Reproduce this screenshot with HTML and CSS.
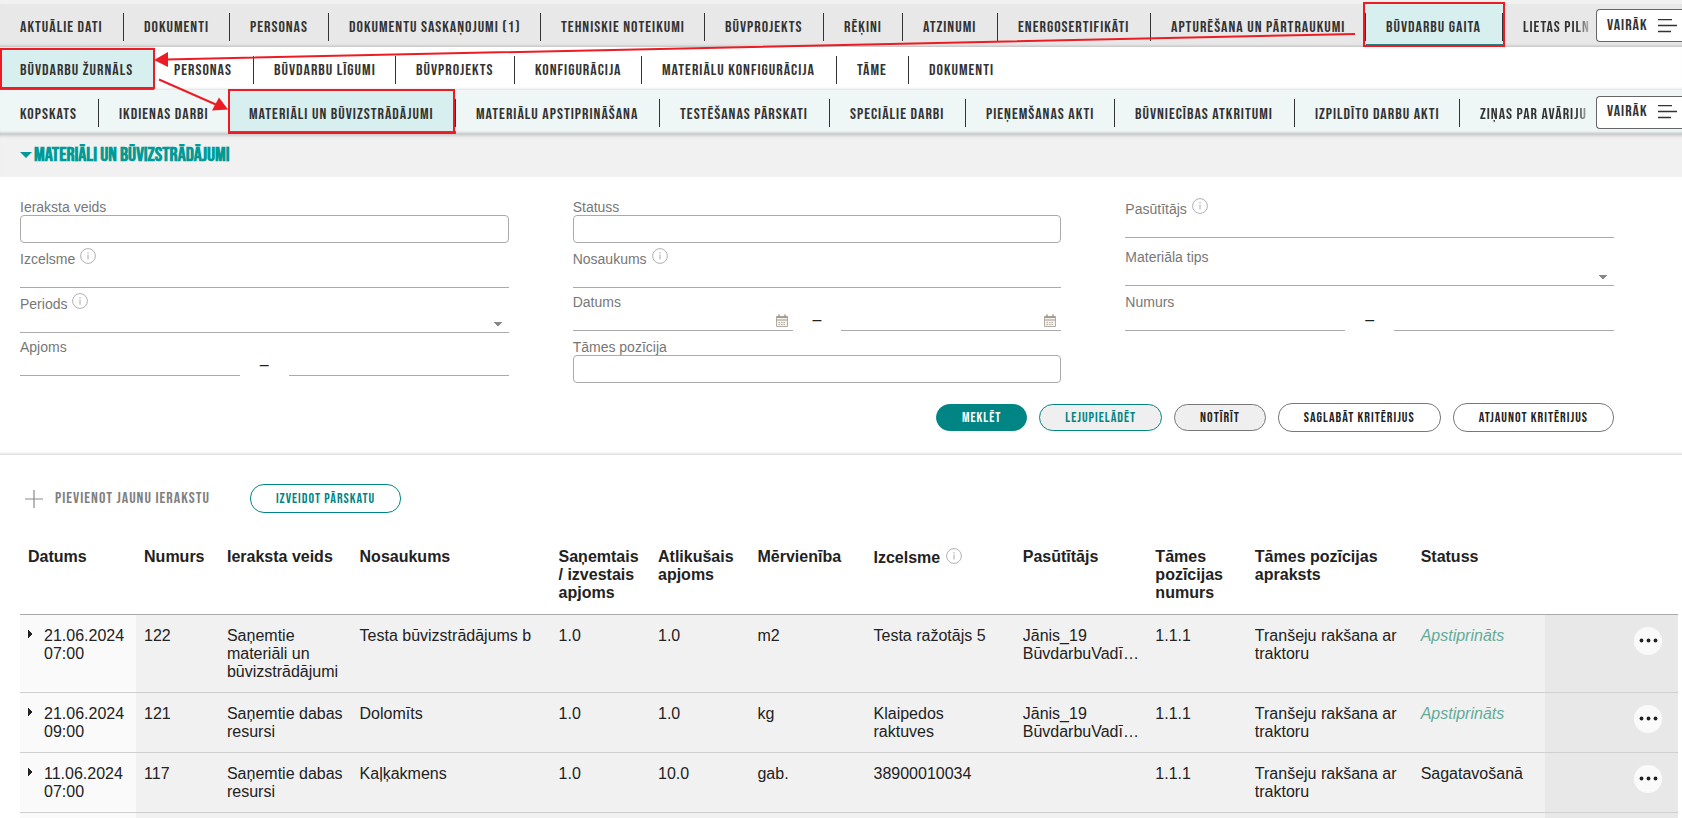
FILE: index.html
```html
<!DOCTYPE html>
<html lang="lv">
<head>
<meta charset="utf-8">
<title>Materiāli un būvizstrādājumi</title>
<link rel="stylesheet" href="styles.css">
</head>
<body>
<svg class="symbols" aria-hidden="true">
  <symbol id="info" viewBox="0 0 16 16"><circle cx="8" cy="8" r="7.4" fill="none" stroke="#b0b0b0"/><path d="M8 6.5v5M8 4v1.4" stroke="#b8b8b8" stroke-width="1.2" fill="none"/></symbol>
  <symbol id="menu" viewBox="0 0 20 14"><path d="M0 .5h14M0 6.500h19M0 12.500h13" stroke="#333" stroke-width="1.3" fill="none"/></symbol>
  <symbol id="calendar" viewBox="0 0 12 13"><path d="M.5 2.500h11v10H.5z" fill="#f4f2ee" stroke="#b5ada2"/><path d="M.5 2.500h11v1.500H.5zM.5 5.500h11v1H.5z" fill="#a49b8e"/><path d="M3 .5v2.500M9 .5v2.500" stroke="#a49b8e" stroke-width="1.600"/><path d="M2.500 8.500h7M2.500 10.500h7" stroke="#b5ada2" stroke-dasharray="1.500 1"/></symbol>
  <symbol id="dots" viewBox="0 0 28 28"><g fill="#222"><circle cx="7.500" cy="13.500" r="1.900"/><circle cx="14.500" cy="13.500" r="1.900"/><circle cx="21.500" cy="13.500" r="1.900"/></g></symbol>
</svg>

<header class="navs">
  <nav class="nav nav-main" aria-label="Lieta">
    <a href="#">Aktuālie dati</a><a href="#">Dokumenti</a><a href="#">Personas</a><a href="#">Dokumentu saskaņojumi (1)</a><a href="#">Tehniskie noteikumi</a><a href="#">Būvprojekts</a><a href="#">Rēķini</a><a href="#">Atzinumi</a><a href="#">Energosertifikāti</a><a href="#">Apturēšana un pārtraukumi</a><a href="#" class="active">Būvdarbu gaita</a><a href="#" class="cut">Lietas piln</a>
    <button type="button">Vairāk <svg class="menu-icon"><use href="#menu"/></svg></button>
  </nav>
  <nav class="nav nav-work" aria-label="Būvdarbi">
    <a href="#" class="active">Būvdarbu žurnāls</a><a href="#">Personas</a><a href="#">Būvdarbu līgumi</a><a href="#">Būvprojekts</a><a href="#">Konfigurācija</a><a href="#">Materiālu konfigurācija</a><a href="#">Tāme</a><a href="#">Dokumenti</a>
  </nav>
  <nav class="nav nav-journal" aria-label="Žurnāls">
    <a href="#">Kopskats</a><a href="#">Ikdienas darbi</a><a href="#" class="active">Materiāli un būvizstrādājumi</a><a href="#">Materiālu apstiprināšana</a><a href="#">Testēšanas pārskati</a><a href="#">Speciālie darbi</a><a href="#">Pieņemšanas akti</a><a href="#">Būvniecības atkritumi</a><a href="#">Izpildīto darbu akti</a><a href="#" class="cut">Ziņas par avāriju</a>
    <button type="button">Vairāk <svg class="menu-icon"><use href="#menu"/></svg></button>
  </nav>
  <svg class="marks" aria-hidden="true">
    <g fill="none" stroke="#ed1c24" stroke-width="2">
      <path d="M1364 3h140v43h-140zM1 49h153v39H1zM229 90h225v43H229z"/>
      <path d="M1355 34L166 59.500M159 79.500L217 105"/>
    </g>
    <path d="M154 60l14-8v15zM228 109.500l-9-12-7 13z" fill="#ed1c24"/>
  </svg>
</header>

<main>
  <h1><button type="button"><span class="caret"></span>Materiāli un būvizstrādājumi</button></h1>

  <form class="search">
    <div class="fields">
      <div class="field"><label for="veids">Ieraksta veids</label><input id="veids" class="box" type="text"></div>
      <div class="field"><label for="statuss">Statuss</label><input id="statuss" class="box" type="text"></div>
      <div class="field"><label for="pasutitajs" class="hint">Pasūtītājs <svg class="info"><use href="#info"/></svg></label><input id="pasutitajs" type="text"></div>

      <div class="field"><label for="izcelsme" class="hint">Izcelsme <svg class="info"><use href="#info"/></svg></label><input id="izcelsme" type="text"></div>
      <div class="field"><label for="nosaukums" class="hint">Nosaukums <svg class="info"><use href="#info"/></svg></label><input id="nosaukums" type="text"></div>
      <div class="field"><label for="tips">Materiāla tips</label><select id="tips"><option></option></select></div>

      <div class="field"><label for="periods" class="hint">Periods <svg class="info"><use href="#info"/></svg></label><select id="periods"><option></option></select></div>
      <div class="field"><label for="datums">Datums</label>
        <div class="range"><span class="date"><input id="datums" type="text"><svg class="calendar"><use href="#calendar"/></svg></span><span>–</span><span class="date"><input type="text" aria-label="Datums līdz"><svg class="calendar"><use href="#calendar"/></svg></span></div></div>
      <div class="field"><label for="numurs">Numurs</label>
        <div class="range"><input id="numurs" type="text"><span>–</span><input type="text" aria-label="Numurs līdz"></div></div>

      <div class="field"><label for="apjoms">Apjoms</label>
        <div class="range"><input id="apjoms" type="text"><span>–</span><input type="text" aria-label="Apjoms līdz"></div></div>
      <div class="field"><label for="tame">Tāmes pozīcija</label><input id="tame" class="box" type="text"></div>
    </div>
    <div class="buttons">
      <button type="button" class="btn primary">Meklēt</button>
      <button type="button" class="btn teal gray">Lejupielādēt</button>
      <button type="button" class="btn gray">Notīrīt</button>
      <button type="button" class="btn tall">Saglabāt kritērijus</button>
      <button type="button" class="btn tall">Atjaunot kritērijus</button>
    </div>
  </form>

  <section class="results">
    <div class="actions">
      <button type="button" class="add"><svg class="plus" viewBox="0 0 18 18"><path d="M9 0v18M0 9h18" stroke="#8a8a8a" stroke-width="1.200"/></svg>Pievienot jaunu ierakstu</button>
      <button type="button" class="btn teal tall">Izveidot pārskatu</button>
    </div>
    <table>
      <colgroup><col class="w7"><col class="w5"><col class="w8"><col class="w12"><col class="w6"><col class="w6"><col class="w7"><col class="w9"><col class="w8"><col class="w6"><col class="w10"><col class="w8"><col class="w8"></colgroup>
      <thead>
        <tr><th>Datums</th><th>Numurs</th><th>Ieraksta veids</th><th>Nosaukums</th><th>Saņemtais / izvestais apjoms</th><th>Atlikušais apjoms</th><th>Mērvienība</th><th>Izcelsme <svg class="info"><use href="#info"/></svg></th><th>Pasūtītājs</th><th>Tāmes pozīcijas numurs</th><th>Tāmes pozīcijas apraksts</th><th>Statuss</th><th></th></tr>
      </thead>
      <tbody>
        <tr><td class="when">21.06.2024 07:00</td><td>122</td><td>Saņemtie materiāli un būvizstrādājumi</td><td>Testa būvizstrādājums b</td><td>1.0</td><td>1.0</td><td>m2</td><td>Testa ražotājs 5</td><td>Jānis_19 BūvdarbuVadī…</td><td>1.1.1</td><td>Tranšeju rakšana ar traktoru</td><td class="approved">Apstiprināts</td><td class="menu"><button type="button" aria-label="Darbības"><svg><use href="#dots"/></svg></button></td></tr>
        <tr><td class="when">21.06.2024 09:00</td><td>121</td><td>Saņemtie dabas resursi</td><td>Dolomīts</td><td>1.0</td><td>1.0</td><td>kg</td><td>Klaipedos raktuves</td><td>Jānis_19 BūvdarbuVadī…</td><td>1.1.1</td><td>Tranšeju rakšana ar traktoru</td><td class="approved">Apstiprināts</td><td class="menu"><button type="button" aria-label="Darbības"><svg><use href="#dots"/></svg></button></td></tr>
        <tr><td class="when">11.06.2024 07:00</td><td>117</td><td>Saņemtie dabas resursi</td><td>Kaļķakmens</td><td>1.0</td><td>10.0</td><td>gab.</td><td>38900010034</td><td></td><td>1.1.1</td><td>Tranšeju rakšana ar traktoru</td><td>Sagatavošanā</td><td class="menu"><button type="button" aria-label="Darbības"><svg><use href="#dots"/></svg></button></td></tr>
        <tr><td></td><td></td><td></td><td></td><td></td><td></td><td></td><td></td><td></td><td></td><td></td><td></td><td class="menu"></td></tr>
      </tbody>
    </table>
  </section>
</main>
</body>
</html>
```

FILE: styles.css
```css
* { box-sizing: border-box; }

html, body { height: 100%; }

body {
  margin: 0;
  overflow: hidden;
  background: #fff;
  color: #222;
  font: 16px/18px "Liberation Sans", Arial, sans-serif;
}

button, input, select { font: inherit; color: inherit; }
button { cursor: pointer; }

.symbols { display: none; }

.nav, h1, .btn, .add {
  font-family: "Bebas Neue", "Liberation Sans Narrow", "Liberation Sans", sans-serif;
  text-transform: uppercase;
}

.nav, .nav button, .btn, .add { letter-spacing: 1px; }

/* Navigation */
.navs {
  position: relative;
  padding-top: 4px;
  background: #f1f1f1;
}

.nav {
  display: grid;
  height: 43px;
  font-size: 16px;
}

.nav-main {
  grid-template-columns: 124px 106px 99px 212px 164px 119px 79px 95px 153px 215px 137px 1fr 86px;
  background: #e8e8e8;
  box-shadow: inset 0 -3px 3px -2px #bbb;
}

.nav-work {
  grid-template-columns: 154px 100px 142px 119px 127px 195px 72px 1fr;
  background: #fff;
  box-shadow: inset 0 -3px 3px -2px #ddd;
}

.nav-journal {
  grid-template-columns: 99px 130px 227px 204px 170px 136px 149px 180px 165px 1fr 86px;
  height: 44px;
  background: #eef6f6;
  box-shadow: inset 0 -3px 3px -2px #bbb;
}

.nav a {
  display: flex;
  align-items: center;
  min-width: 0;
  padding-top: 5px;
  padding-left: 20px;
  color: #333;
  text-decoration: none;
  white-space: nowrap;
  background: linear-gradient(#333, #333) right 9px / 1px 28px no-repeat;
}

.nav a:nth-last-of-type(1) { background: none; }

.nav a.active {
  padding-top: 8px;
  border-bottom: 3px solid #2b7d7d;
  background-color: #d8efef;
}

.nav a.cut {
  overflow: hidden;
  mask-image: linear-gradient(90deg, #000 calc(100% - 20px), transparent calc(100% - 2px));
}

.nav button {
  display: flex;
  align-items: center;
  align-self: center;
  justify-content: space-between;
  height: 33px;
  padding: 0 4px 0 10px;
  border: 1px solid #666;
  border-right: 0;
  border-radius: 4px 0 0 4px;
  background: #fff;
  color: #333;
  text-transform: uppercase;
}

.menu-icon { width: 20px; height: 14px; }

.marks {
  position: absolute;
  inset: 0;
  width: 100%;
  height: 100%;
  pointer-events: none;
}

/* Section heading */
h1 {
  margin: 0;
  height: 43px;
  padding: 11px 20px;
  background: #f1f1f1;
  box-shadow: inset 0 4px 4px -4px #999;
  font-size: 20px;
  line-height: 20px;
}

h1 button {
  display: flex;
  align-items: center;
  gap: 2px;
  padding: 0;
  border: 0;
  background: none;
  color: #009a97;
  text-transform: uppercase;
}

.caret {
  border: 6px solid transparent;
  border-top-color: #009a97;
  border-bottom: 0;
}

/* Search form */
.search {
  padding: 22px 68px 22px 20px;
  border-bottom: 1px solid #e2e2e2;
  box-shadow: inset 0 -3px 3px -3px #ccc;
}

.fields {
  display: grid;
  grid-template-columns: repeat(3, 1fr);
  gap: 6px 64px;
}

.field label {
  display: flex;
  gap: 5px;
  height: 16px;
  font-size: 14px;
  line-height: 16px;
  color: #777;
}

.field .hint { height: 18px; line-height: 20px; }

.info { width: 16px; height: 16px; }
.hint .info { margin-top: -1px; }

.field input, .field select {
  display: block;
  width: 100%;
  min-width: 0;
  height: 21px;
  padding: 0 4px;
  border: 0;
  border-bottom: 1px solid #aaa;
  border-radius: 0;
  outline: 0;
  background: none;
  font-size: 14px;
}

.field .box {
  height: 28px;
  border: 1px solid #aaa;
  border-radius: 4px;
}

.field select {
  appearance: none;
  background: conic-gradient(from -39deg at 50% 100%, #888 78deg, transparent 0) right 7px top 10px / 8px 5px no-repeat;
}

.range {
  display: grid;
  grid-template-columns: 9fr 2fr 9fr;
  line-height: 20px;
  text-align: center;
}

.date { position: relative; }

.calendar {
  position: absolute;
  right: 5px;
  bottom: 4px;
  width: 12px;
  height: 13px;
}

.buttons {
  display: flex;
  justify-content: flex-end;
  align-items: center;
  gap: 12px;
  margin-top: 20px;
}

.btn {
  height: 27px;
  padding: 0 25px;
  border: 1px solid #777;
  border-radius: 14px;
  background: #fff;
  color: #222;
  font-size: 14px;
}

.btn.gray { background: #efefef; }
.btn.tall { height: 29px; }
.btn.teal { border-color: #008584; color: #008584; }
.btn.primary { border-color: #008584; background: #008584; color: #fff; }

/* Results */
.results { padding: 29px 4px 0 20px; }

.actions {
  display: flex;
  align-items: center;
  gap: 40px;
}

.add {
  display: flex;
  align-items: center;
  gap: 12px;
  padding: 0 0 0 5px;
  border: 0;
  background: none;
  color: #808080;
  font-size: 16px;
}

.plus { width: 18px; height: 18px; }

table {
  width: 100%;
  margin-top: 23px;
  border-collapse: collapse;
  table-layout: fixed;
}

.w5 { width: 5%; }
.w6 { width: 6%; }
.w7 { width: 7%; }
.w8 { width: 8%; }
.w9 { width: 9%; }
.w10 { width: 10%; }
.w12 { width: 12%; }

th, td {
  padding: 12px 8px;
  text-align: left;
  vertical-align: top;
}

th { border-bottom: 1px solid #aaa; }
th .info { margin-left: 1px; vertical-align: -1px; }

td {
  padding-bottom: 11px;
  border-bottom: 1px solid #d0d0d0;
  background: #f1f1f1;
}

td:first-child { background: #fafafa; }

td.when {
  padding-left: 24px;
  background: conic-gradient(from 231deg at 100% 50%, #222 78deg, transparent 0) 8px 15px / 5px 8px no-repeat #fafafa;
}

td.approved { color: #64ab98; font-style: italic; }
td.menu { background: #e8e8e8; text-align: right; }

.menu button {
  width: 28px;
  height: 28px;
  margin-right: 8px;
  padding: 0;
  border: 0;
  border-radius: 50%;
  background: #fafafa;
}

.menu svg { display: block; width: 28px; height: 28px; }
```
